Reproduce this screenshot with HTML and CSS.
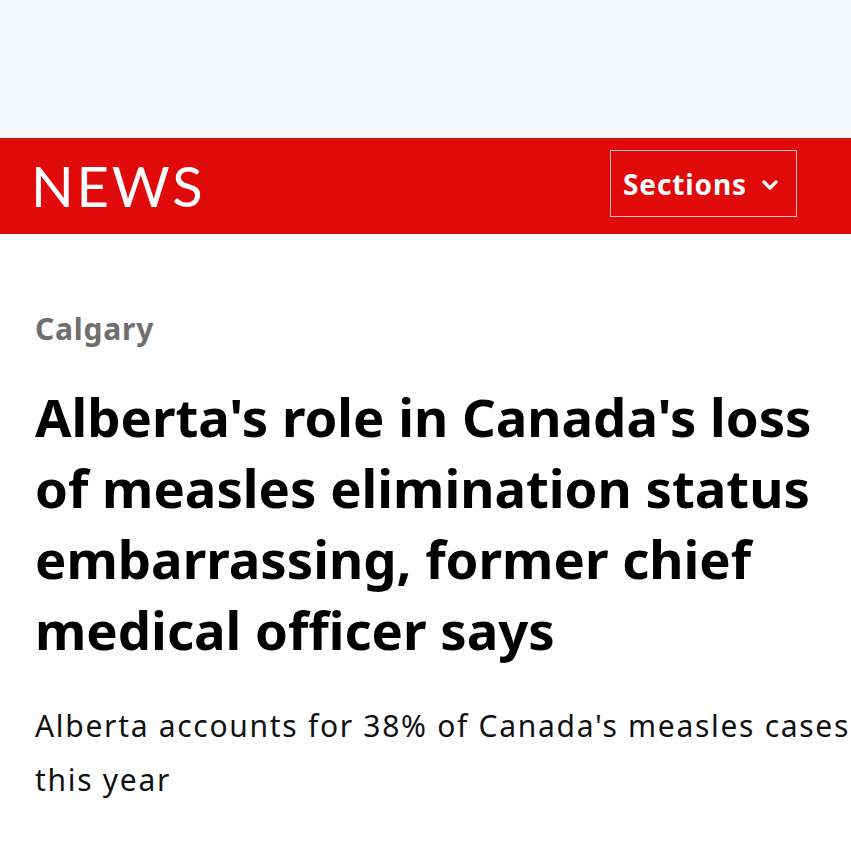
FILE: index.html
```html
<!DOCTYPE html>
<html lang="en">
<head>
<meta charset="utf-8">
<title>CBC News - Calgary</title>
<link rel="stylesheet" href="styles.css">
</head>
<body>
<div class="top"></div>
<header class="bar">
  <div class="logo">NEWS</div>
  <button class="sections">Sections
    <svg class="chev" width="18" height="12" viewBox="0 0 18 12"><path d="M3 3 L9 9 L15 3" fill="none" stroke="#fff" stroke-width="3.2" stroke-linecap="round" stroke-linejoin="round"/></svg>
  </button>
</header>
<main class="article">
  <div class="category">Calgary</div>
  <h1 class="headline">Alberta's role in Canada's loss of measles elimination status embarrassing, former chief medical officer says</h1>
  <p class="deck">Alberta accounts for 38% of Canada's measles cases this year</p>
</main>
</body>
</html>
```
FILE: styles.css
```css
html, body {
  margin: 0;
  padding: 0;
  background: #ffffff;
  font-family: "Noto Sans", "Open Sans", sans-serif;
  overflow: hidden;
}
.top {
  height: 138px;
  background: #f5f9fc;
}
.bar {
  height: 96px;
  background: #e10a0a;
  display: flex;
  justify-content: space-between;
  align-items: flex-start;
  padding: 0 54px 0 31px;
}
.logo {
  font-family: "Lato", sans-serif;
  font-weight: 400;
  font-size: 56px;
  color: #ffffff;
  line-height: 96px;
  letter-spacing: 2.8px;
}
.sections {
  margin-top: 12px;
  width: 187px;
  height: 67px;
  border: 1.5px solid rgba(255, 225, 225, 0.85);
  background: transparent;
  color: #ffffff;
  font-family: "Noto Sans", sans-serif;
  font-weight: 700;
  font-size: 28px;
  letter-spacing: 0.9px;
  display: flex;
  align-items: center;
  gap: 14px;
  padding: 0 0 0 12px;
}
.chev {
  margin-top: 2px;
}
.article {
  padding: 0 0 0 35px;
}
.category {
  margin-top: 75px;
  font-size: 30px;
  font-weight: 700;
  color: #6f6f6f;
  line-height: 40px;
  letter-spacing: 0.8px;
}
.headline {
  margin: 32px 0 0;
  font-size: 52.7px;
  font-weight: 700;
  line-height: 71px;
  color: #000000;
  padding-right: 10px;
}
.deck {
  margin: 34px 0 0;
  font-size: 30px;
  line-height: 54px;
  color: #111111;
  letter-spacing: 1.7px;
  width: 830px;
}
```
